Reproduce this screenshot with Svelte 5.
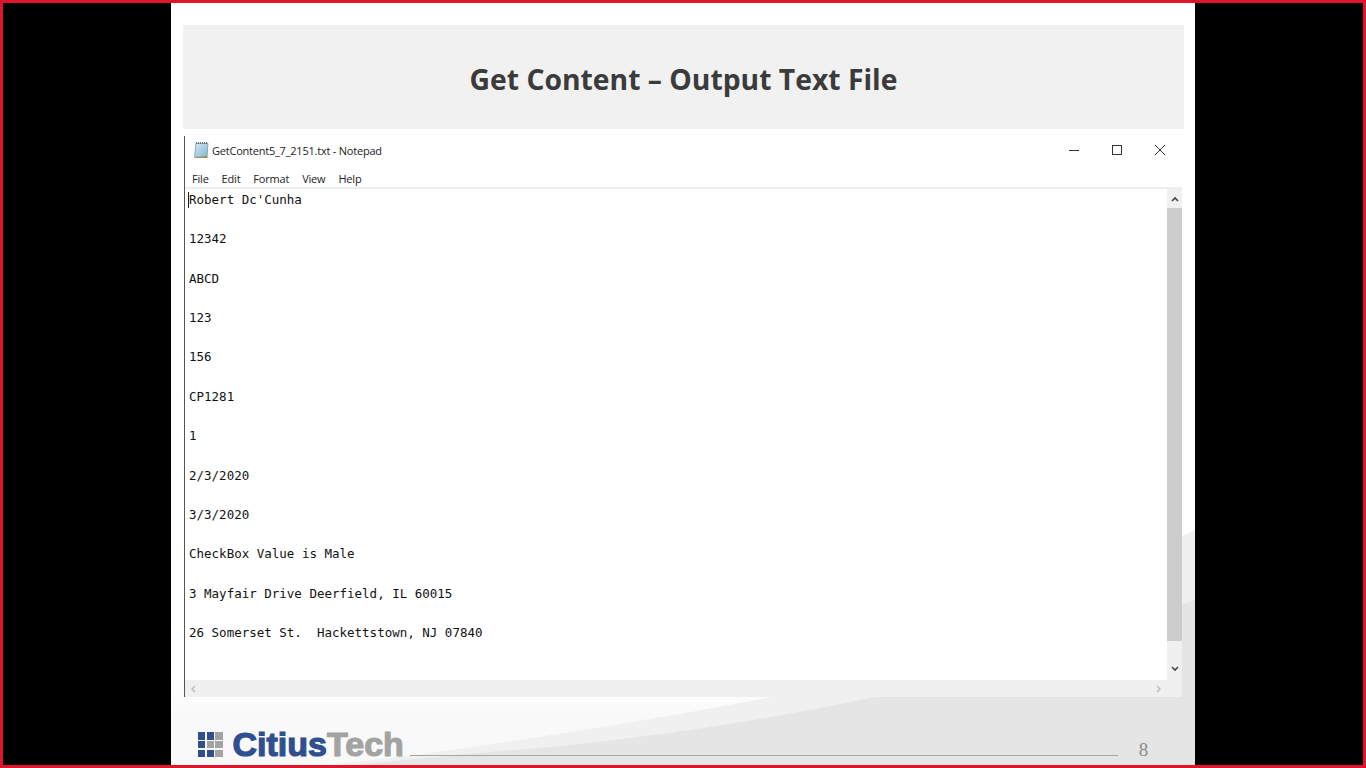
<script>
	const menu = ["File", "Edit", "Format", "View", "Help"];
	const lines = [
		"Robert Dc'Cunha",
		"12342",
		"ABCD",
		"123",
		"156",
		"CP1281",
		"1",
		"2/3/2020",
		"3/3/2020",
		"CheckBox Value is Male",
		"3 Mayfair Drive Deerfield, IL 60015",
		"26 Somerset St.  Hackettstown, NJ 07840",
	];
	// logo squares, top left to bottom right
	const cells = [1, 1, 0, 1, 0, 0, 1, 1, 0];
</script>

<div class="screen">
	<div class="slide">
		<svg class="swoosh" width="1024" height="765" viewBox="171 3 1024 765" aria-hidden="true">
			<defs>
				<linearGradient id="fade" x1="0" y1="0" x2="0" y2="1">
					<stop offset="0" stop-color="#ffffff" />
					<stop offset="0.5" stop-color="#f9f9f9" />
				</linearGradient>
			</defs>
			<rect x="171" y="670" width="1024" height="98" fill="url(#fade)" />
			<path d="M1195 530 Q1000 625 772 697 Q600 730 400 757 L300 768 H1195 Z" fill="#f0f0f0" />
			<path d="M1195 600 Q1040 655 875 697 Q720 730 560 746 Q420 758 330 768 H1195 Z" fill="#e5e5e5" />
		</svg>

		<header class="title">
			<h1>Get Content – Output Text File</h1>
		</header>

		<section class="notepad">
			<div class="titlebar">
				<svg class="np-icon" width="16" height="18" viewBox="0 0 16 18" aria-hidden="true">
					<defs>
						<linearGradient id="pad" x1="0" y1="0" x2="1" y2="1">
							<stop offset="0" stop-color="#d6eaf4" />
							<stop offset="1" stop-color="#7fb4cf" />
						</linearGradient>
					</defs>
					<path d="M3 2.5 H15 L14 16.5 H1.5 Z" fill="url(#pad)" stroke="#6d8fa0" stroke-width="0.7" />
					<path d="M14.8 15 L14 17 H3 V16 Z" fill="#a08a5c" />
					<path d="M3.5 1 V3 M5.5 1 V3 M7.5 1 V3 M9.5 1 V3 M11.5 1 V3 M13.5 1 V3" stroke="#5b6b78" stroke-width="0.9" />
				</svg>
				<span class="win-title">GetContent5_7_2151.txt - Notepad</span>
				<div class="controls">
					<svg width="12" height="12" viewBox="0 0 12 12" aria-hidden="true"><path d="M1 6.5 H11" stroke="#333" fill="none" /></svg>
					<svg width="12" height="12" viewBox="0 0 12 12" aria-hidden="true"><rect x="1.5" y="1.5" width="9" height="9" stroke="#333" fill="none" /></svg>
					<svg width="12" height="12" viewBox="0 0 12 12" aria-hidden="true"><path d="M1 1 L11 11 M11 1 L1 11" stroke="#333" fill="none" /></svg>
				</div>
			</div>
			<nav class="menu">
				{#each menu as item}
					<span>{item}</span>
				{/each}
			</nav>
			<div class="body">
				<div class="text">
					<i class="caret"></i>
					{#each lines as line}
						<div class="line">{line}</div>
					{/each}
				</div>
				<div class="vbar">
					<svg width="8" height="6" viewBox="0 0 8 6" aria-hidden="true"><path d="M1 5 L4 2 L7 5" stroke="#444" stroke-width="1.6" fill="none" /></svg>
					<div class="thumb"></div>
					<svg width="8" height="6" viewBox="0 0 8 6" aria-hidden="true"><path d="M1 1 L4 4 L7 1" stroke="#444" stroke-width="1.6" fill="none" /></svg>
				</div>
				<div class="hbar">
					<svg width="6" height="8" viewBox="0 0 6 8" aria-hidden="true"><path d="M5 1 L2 4 L5 7" stroke="#bbb" stroke-width="1.4" fill="none" /></svg>
					<svg width="6" height="8" viewBox="0 0 6 8" aria-hidden="true"><path d="M1 1 L4 4 L1 7" stroke="#bbb" stroke-width="1.4" fill="none" /></svg>
				</div>
			</div>
		</section>

		<footer class="foot">
			<div class="grid">
				{#each cells as c}
					<b class:blue={c}></b>
				{/each}
			</div>
			<div class="brand"><span class="citius">Citius</span><span class="tech">Tech</span></div>
			<div class="rule"></div>
			<div class="page">8</div>
		</footer>
	</div>
</div>

<style>
	:global(body) {
		margin: 0;
		background: #000;
	}
	.screen {
		box-sizing: border-box;
		width: 1366px;
		height: 768px;
		border: 3px solid #e0142c;
		background: #000;
		display: flex;
		justify-content: center;
		overflow: hidden;
	}
	.slide {
		position: relative;
		box-sizing: border-box;
		width: 1024px;
		height: 762px;
		padding: 22px 11px 0 12px;
		background: #fff;
		display: flex;
		flex-direction: column;
	}
	.swoosh {
		position: absolute;
		left: 0;
		top: 0;
	}
	.title {
		position: relative;
		height: 104px;
		background: #f1f1f1;
		display: flex;
		align-items: center;
		justify-content: center;
	}
	h1 {
		margin: 4px 0 0;
		font: 700 28.3px "Open Sans", sans-serif;
		color: #3b3b3b;
	}
	.notepad {
		position: relative;
		margin: 7px 2px 0 1px;
		height: 561px;
		background: #fff;
		border-left: 1px solid #555;
		display: flex;
		flex-direction: column;
		font-family: "Open Sans", sans-serif;
		color: #222;
	}
	.titlebar {
		height: 30px;
		flex: none;
		display: flex;
		align-items: center;
		padding-left: 8px;
		gap: 3px;
	}
	.np-icon {
		margin-top: -2px;
	}
	.win-title {
		font-size: 11px;
		letter-spacing: -0.22px;
		margin-top: -1px;
	}
	.controls {
		margin: 0 16px 2px auto;
		display: flex;
		gap: 31px;
	}
	.menu {
		height: 23px;
		flex: none;
		display: flex;
		align-items: center;
		padding: 3px 0 0 7px;
		gap: 13px;
		font-size: 11px;
		letter-spacing: -0.2px;
		border-bottom: 2px solid #eee;
		box-sizing: border-box;
	}
	.body {
		flex: 1;
		display: grid;
		grid-template-columns: 1fr 15px;
		grid-template-rows: 1fr 17px;
		min-height: 0;
	}
	.text {
		position: relative;
		padding: 0 0 0 4px;
		font: 12.5px "DejaVu Sans Mono", monospace;
		color: #111;
	}
	.line {
		height: 39.36px;
		line-height: 22px;
		white-space: pre;
	}
	.caret {
		position: absolute;
		left: 3px;
		top: 3px;
		width: 1px;
		height: 16px;
		background: #222;
	}
	.vbar {
		grid-row: 1 / 3;
		grid-column: 2;
		background: #f0f0f0;
		display: flex;
		flex-direction: column;
		align-items: center;
		padding-top: 7px;
	}
	.thumb {
		align-self: stretch;
		margin: 6px 0 0;
		height: 433px;
		background: #cdcdcd;
	}
	.vbar svg:last-child {
		margin-top: 25px;
	}
	.hbar {
		background: #f0f0f0;
		display: flex;
		align-items: center;
		justify-content: space-between;
		padding: 0 5px 0 5px;
	}
	.foot {
		position: relative;
		flex: 1;
		display: flex;
		align-items: flex-end;
		padding: 0 0 6px 15px;
	}
	.grid {
		display: grid;
		grid-template-columns: repeat(3, 7.4px);
		grid-template-rows: repeat(3, 7.4px);
		gap: 1.2px;
		margin-bottom: 2px;
	}
	.grid b {
		background: #a3a3a3;
	}
	.grid b.blue {
		background: #2f4f8f;
	}
	.brand {
		margin-left: 10px;
		font: 700 34px/30px "Liberation Sans", sans-serif;
		-webkit-text-stroke: 1.2px currentColor;
	}
	.citius {
		color: #2f4f8f;
	}
	.tech {
		color: #a3a3a3;
	}
	.rule {
		width: 708px;
		height: 1px;
		margin: 0 0 3px 6px;
		background: #a6a6a6;
	}
	.page {
		margin: 0 0 -1px 21px;
		font: 19px/20px "Liberation Serif", serif;
		color: #8a8a8a;
	}
</style>
